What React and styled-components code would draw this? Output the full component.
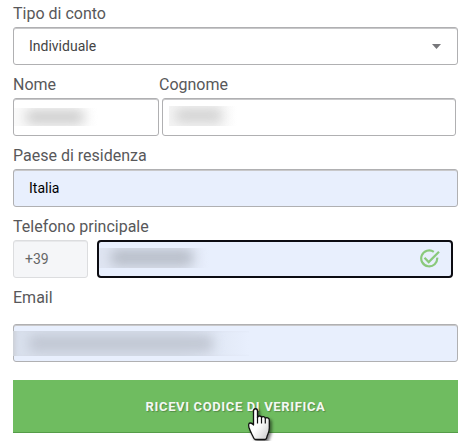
import React from "react";
import styled, { createGlobalStyle } from "styled-components";

const App = () => {
  return (
    <>
      <GlobalStyle />
      <Form>
        <Group>
          <Label>Tipo di conto</Label>
          <Field>
            Individuale
            <svg width="9" height="5" viewBox="0 0 9 5">
              <path d="M0 0h9L4.5 5z" fill="#77777a" />
            </svg>
          </Field>
        </Group>
        <Group>
          <NameRow>
            <Label>Nome</Label>
            <Label>Cognome</Label>
          </NameRow>
          <FieldRow $gap="3px">
            <HiddenField $width="146px">
              <Hidden $width="84px" $height="18px" $inset="12px" $tint="#fafafa">
                <Smudge $width="58px" $height="14px" $color="#cdcdcd" />
              </Hidden>
            </HiddenField>
            <HiddenField $width="294px" $inset="6px" $lift="3px">
              <Hidden $width="68px" $height="20px" $inset="6px" $tint="#f5f5f5">
                <Smudge $width="47px" $height="13px" $color="#d0d0d0" />
              </Hidden>
            </HiddenField>
          </FieldRow>
        </Group>
        <Group>
          <Label>Paese di residenza</Label>
          <Field $filled>Italia</Field>
        </Group>
        <Group>
          <Label>Telefono principale</Label>
          <FieldRow $gap="9px">
            <Prefix>+39</Prefix>
            <PhoneField $filled>
              <Hidden $width="111px" $height="20px" $inset="12px" $tint="#dfe5f2">
                <Smudge $width="82px" $height="17px" $color="#b9bfca" />
              </Hidden>
              <Check width="21" height="20" viewBox="0 0 21 20" fill="none">
                <path
                  d="M14.8 2.8A8 8 0 1 0 18.2 8.7M5.5 8.8l4.2 4.3L20 2.7"
                  stroke="#8ac97b"
                  strokeWidth="2.2"
                />
              </Check>
            </PhoneField>
          </FieldRow>
        </Group>
        <Group $gap="17px">
          <Label>Email</Label>
          <HiddenField $filled>
            <EmailHidden $width="236px" $height="25px" $inset="16px" $tint="#d9e0ed">
              <Smudge $width="184px" $height="17px" $color="#c1c7d3" />
            </EmailHidden>
          </HiddenField>
        </Group>
        <Actions>
          <Submit type="button">RICEVI CODICE DI VERIFICA</Submit>
          <Hand width="24" height="33" viewBox="0 0 24 33">
            <defs>
              <linearGradient id="palm" x1="0" y1="0" x2="1" y2="1">
                <stop offset="0.5" stopColor="#fff" />
                <stop offset="1" stopColor="#c8c8c8" />
              </linearGradient>
            </defs>
            <path
              d="M5.500 17V3c0-3 4-3 4 0v6.500c.5-2 3.800-2 4 0 .6-1.500 3.500-1.200 3.800.8 1-1.200 4-.8 4 1.700V20c0 4-1.300 5.500-2.300 8.500-.2 2-.5 3-2 3H7.500c-1.600 0-1.800-1.600-2.500-3C3.500 25.500 2 23 1 19.500c-.6-2.300-.4-4.300 1-4.500 1.600-.1 2.700.8 3.500 2z"
              fill="url(#palm)"
              stroke="#111"
              strokeWidth="1.3"
              strokeLinejoin="round"
            />
            <path
              d="M9.5 9v6.500M13.5 9.500v6M17.3 10.500v5"
              stroke="#111"
              strokeWidth="1.2"
            />
          </Hand>
        </Actions>
      </Form>
    </>
  );
};

const GlobalStyle = createGlobalStyle`
  body {
    margin: 0;
    min-height: 100vh;
    background: #fff;
  }
  * {
    box-sizing: border-box;
  }
`;

const Form = styled.div`
  display: flex;
  flex-direction: column;
  gap: 10px;
  width: 458px;
  height: 441px;
  padding: 4px 0 0 13px;
  overflow: hidden;
  font-family: Roboto, sans-serif;
`;

const Group = styled.div`
  display: flex;
  flex-direction: column;
  gap: ${({ $gap }) => $gap || "4px"};
`;

const Label = styled.div`
  font-size: 16px;
  line-height: 19px;
  color: #58585a;
`;

const NameRow = styled.div`
  display: grid;
  grid-template-columns: 146px 1fr;
`;

const FieldRow = styled.div`
  display: flex;
  gap: ${({ $gap }) => $gap};
`;

const Field = styled.div`
  display: flex;
  align-items: center;
  justify-content: space-between;
  width: ${({ $width }) => $width || "445px"};
  height: 38px;
  padding: 0 16px 0 15px;
  border: 1px solid #b0b0b2;
  border-radius: 3px;
  box-shadow: inset 0 1px 0 #c8c8ca;
  background: ${({ $filled }) => ($filled ? "#e8effd" : "#fff")};
  color: ${({ $filled }) => ($filled ? "#000" : "#444")};
  font-size: 14px;
`;

const HiddenField = styled(Field)`
  padding: 0 0 ${({ $lift }) => $lift || "0"} ${({ $inset }) => $inset || "0"};
`;

const Prefix = styled(Field)`
  width: 75px;
  padding-left: 11px;
  border-color: #dcdddf;
  box-shadow: inset 0 1px 0 #e8e9eb;
  background: #f5f6f8;
  color: #666;
`;

const PhoneField = styled(Field)`
  width: 356px;
  padding: 0 11px 3px 0;
  border: 2px solid #0c0c12;
  border-radius: 4px;
  box-shadow: none;
`;

const Check = styled.svg`
  margin-top: 3px;
`;

/* obscured value inside a field */
const Hidden = styled.span`
  display: flex;
  align-items: center;
  width: ${({ $width }) => $width};
  height: ${({ $height }) => $height};
  padding-left: ${({ $inset }) => $inset};
  overflow: hidden;
  background: linear-gradient(
    to right,
    ${({ $tint }) => $tint} 70%,
    transparent
  );
`;

const EmailHidden = styled(Hidden)`
  margin-left: -1px;
  box-shadow: inset 5px 0 5px -3px #c9ccd2;
`;

const Smudge = styled.span`
  width: ${({ $width }) => $width};
  height: ${({ $height }) => $height};
  border-radius: 5px;
  background: ${({ $color }) => $color};
  filter: blur(6px);
`;

const Actions = styled.div`
  position: relative;
  padding-top: 8px;
`;

const Submit = styled.button`
  display: block;
  width: 445px;
  height: 53px;
  padding: 0;
  border: 0;
  border-bottom: 1px solid #559c48;
  background: #6fbc60;
  color: #f4f8f3;
  font-family: Roboto, sans-serif;
  font-size: 13px;
  font-weight: 700;
  letter-spacing: 0.64px;
  text-shadow: 1px 1px 1px rgba(0, 0, 0, 0.25);
`;

/* pointer hovering over the button */
const Hand = styled.svg`
  position: absolute;
  top: 36px;
  left: 235px;
  overflow: visible;
  filter: drop-shadow(2px 2px 1.5px rgba(0, 0, 0, 0.5));
`;

export default App;
